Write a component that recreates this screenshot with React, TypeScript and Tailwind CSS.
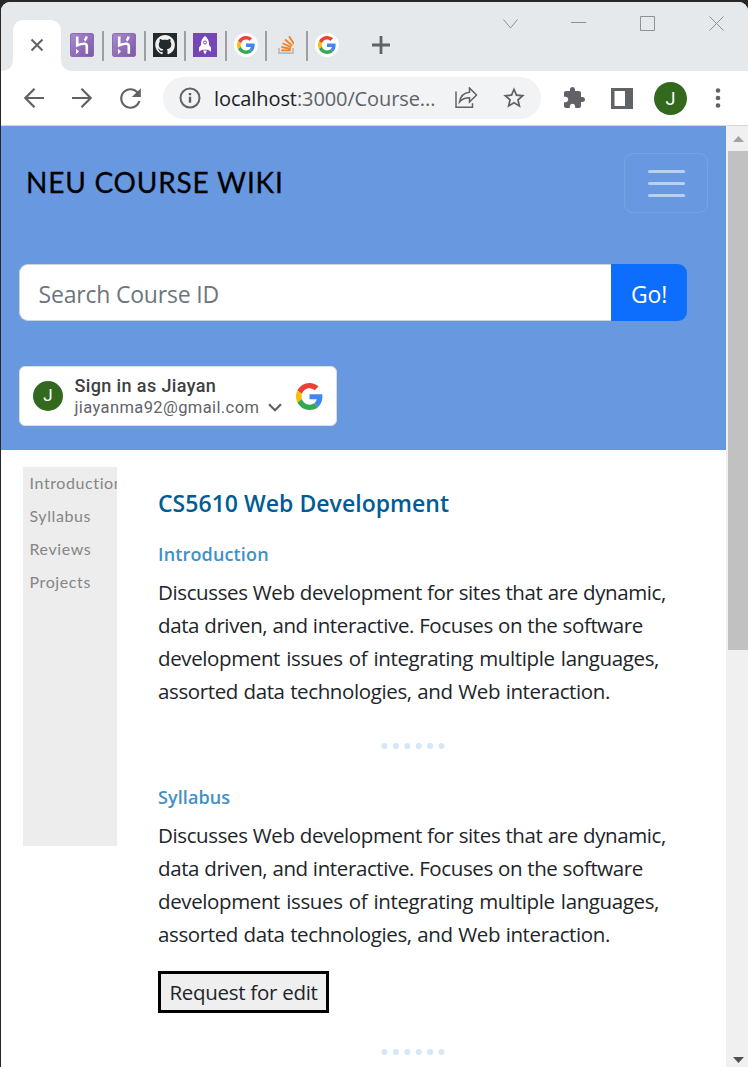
import type { ReactNode } from 'react';

const SEGOE = "font-['Open_Sans','Noto_Sans',sans-serif]";

function GoogleG({ className }: { className: string }) {
  return (
    <svg viewBox="0 0 48 48" className={className}>
      <path fill="#EA4335" d="M24 9.5c3.54 0 6.71 1.22 9.21 3.6l6.85-6.85C35.9 2.38 30.47 0 24 0 14.62 0 6.51 5.38 2.56 13.22l7.98 6.19C12.43 13.72 17.74 9.5 24 9.5z" />
      <path fill="#4285F4" d="M46.98 24.55c0-1.57-.15-3.09-.38-4.55H24v9.02h12.94c-.58 2.96-2.26 5.48-4.78 7.18l7.73 6c4.51-4.18 7.09-10.36 7.09-17.65z" />
      <path fill="#FBBC05" d="M10.53 28.59c-.48-1.45-.76-2.99-.76-4.59s.27-3.14.76-4.59l-7.98-6.19C.92 16.46 0 20.12 0 24c0 3.88.92 7.54 2.56 10.78l7.97-6.19z" />
      <path fill="#34A853" d="M24 48c6.48 0 11.93-2.13 15.89-5.81l-7.73-6c-2.15 1.45-4.92 2.3-8.16 2.3-6.26 0-11.57-4.22-13.47-9.91l-7.98 6.19C6.51 42.62 14.62 48 24 48z" />
    </svg>
  );
}

function Heroku() {
  return (
    <svg viewBox="0 0 24 24" className="size-6">
      <defs>
        <linearGradient id="hk" x1="0" y1="0" x2="1" y2="1">
          <stop offset="0" stopColor="#a98bd0" />
          <stop offset="1" stopColor="#7c56a3" />
        </linearGradient>
      </defs>
      <rect width="24" height="24" rx="3" fill="url(#hk)" />
      <rect x="0.5" y="0.5" width="23" height="23" rx="2.5" fill="none" stroke="#8d6bb8" />
      <path d="M7.2 3.500v8.800c2.600-1.100 5-1.600 7-1.600 2 0 2.600 1 2.600 2.400V20.800" fill="none" stroke="#fff" strokeWidth="2.600" />
      <path d="M16.600 3.500c-.2 1.600-.9 2.900-2 4.100" fill="none" stroke="#fff" strokeWidth="2.500" />
      <path d="M6 15.800v5.400l3-2.700z" fill="#fff" />
    </svg>
  );
}

function Github() {
  return (
    <svg viewBox="0 0 24 24" className="size-6">
      <rect width="24" height="24" fill="#24292e" />
      <g transform="translate(2.200 2) scale(1.230)">
        <path fill="#f0f0ee" d="M8 0C3.580 0 0 3.580 0 8c0 3.540 2.290 6.530 5.470 7.590.4.070.55-.17.55-.38 0-.19-.01-.82-.01-1.490-2.010.37-2.530-.49-2.690-.94-.09-.23-.48-.94-.82-1.130-.28-.15-.68-.52-.01-.53.63-.01 1.080.58 1.230.82.72 1.210 1.870.87 2.330.66.070-.52.28-.87.51-1.070-1.780-.2-3.640-.89-3.640-3.950 0-.87.31-1.590.82-2.150-.08-.2-.36-1.020.08-2.120 0 0 .67-.21 2.200.82.64-.18 1.320-.27 2-.27s1.360.09 2 .27c1.530-1.040 2.200-.82 2.200-.82.44 1.100.16 1.920.08 2.120.51.56.82 1.270.82 2.150 0 3.070-1.870 3.750-3.650 3.950.29.25.54.73.54 1.480 0 1.070-.01 1.930-.01 2.200 0 .21.15.46.55.38A8.013 8.013 0 0 0 16 8c0-4.420-3.580-8-8-8z" />
      </g>
    </svg>
  );
}

function Rocket() {
  return (
    <svg viewBox="0 0 24 24" className="size-6">
      <rect width="24" height="24" fill="#7546b5" />
      <path fill="#fff" d="M12 3c2.600 2 4 4.600 4 7.600v1.400l2 2.600v4.200l-3-2h-6l-3 2v-4.200l2-2.600v-1.400C8 7.600 9.400 5 12 3z" />
      <circle cx="12" cy="9.500" r="1.500" fill="none" stroke="#7546b5" />
      <path fill="#fff" d="M10 17.500h4l-2 4z" />
    </svg>
  );
}

const Sep = () => <div className="mt-[11px] h-[30px] w-[1.500px] shrink-0 bg-[#9b9ea2]" />;

function Fav({ children, className }: { children: ReactNode; className: string }) {
  return <div className={`flex h-[50px] shrink-0 items-center justify-center ${className}`}>{children}</div>;
}

const RoundG = () => (
  <div className="flex size-6 items-center justify-center rounded-full bg-white">
    <GoogleG className="size-[18px]" />
  </div>
);

function TabStrip() {
  return (
    <div className="relative flex h-[69px] shrink-0 items-start bg-[#e5e9ec] pt-[18px]">
      <div className="relative ml-3 h-[51px] w-[48px] shrink-0 rounded-t-[10px] bg-white">
        <svg viewBox="0 0 72 51" className="absolute top-0 -left-3 h-[51px] w-[72px]">
          <path d="M0 51c8 0 12-4 12-12v12zM72 51c-8 0-12-4-12-12v12z" fill="#fff" />
          <path d="M30.500 19.500l11 11M41.500 19.500l-11 11" stroke="#5f6368" strokeWidth="2" />
        </svg>
      </div>
      <Fav className="w-[41px]"><Heroku /></Fav>
      <Sep />
      <Fav className="w-[40.500px]"><Heroku /></Fav>
      <Sep />
      <Fav className="w-[38.500px]"><Github /></Fav>
      <Sep />
      <Fav className="w-[39.500px]"><Rocket /></Fav>
      <Sep />
      <Fav className="w-[38.500px]"><RoundG /></Fav>
      <Sep />
      <Fav className="w-[39.500px]">
        <svg viewBox="0 0 16 20" className="h-5 w-4">
          <path d="M1 13v5.200h14V13" fill="none" stroke="#bcbbbb" strokeWidth="1.800" />
          <path d="M3.200 15.300h9.500M3.400 12l9.300 1.900M4.600 8.300l8.600 4M7 4.500l7.200 6.200M11 1.200l5 7.700" fill="none" stroke="#f48024" strokeWidth="1.800" />
        </svg>
      </Fav>
      <Sep />
      <Fav className="w-[38px]"><RoundG /></Fav>
      <svg viewBox="0 0 18 18" className="mt-4 ml-[26px] size-[18px]">
        <path d="M9 0v18M0 9h18" stroke="#5f6368" strokeWidth="2.800" />
      </svg>
      <svg viewBox="0 0 222 16" className="absolute top-[14px] left-[501px] h-4 w-[222px]" fill="none" stroke="#8e9194" strokeWidth="1">
        <path d="M1.500 3.500l7 8.500 7-8.500M69 6.500h15M138.500 .5h14v14h-14zM207.500 .5l14 14M221.500 .5l-14 14" />
      </svg>
    </div>
  );
}

function Toolbar() {
  return (
    <div className="flex h-[55px] shrink-0 items-center border-b border-[#d5d7da] bg-white">
      <svg viewBox="0 0 24 24" className="ml-[21px] size-6" fill="none" stroke="#5f6368" strokeWidth="2.200">
        <path d="M22 12H4M12.500 2.700L3.300 12l9.200 9.300" />
      </svg>
      <svg viewBox="0 0 24 24" className="ml-6 size-6" fill="none" stroke="#5f6368" strokeWidth="2.200">
        <path d="M2 12h18M11.500 2.700l9.200 9.300-9.200 9.300" />
      </svg>
      <svg viewBox="0 0 24 24" className="ml-[20.500px] size-[31px]" fill="#5f6368">
        <path d="M17.650 6.350C16.200 4.900 14.210 4 12 4c-4.420 0-7.990 3.580-7.990 8s3.570 8 7.990 8c3.730 0 6.840-2.550 7.730-6h-1.800c-.82 2.500-3.200 4.300-5.930 4.300-3.500 0-6.300-2.800-6.300-6.300s2.800-6.300 6.300-6.300c1.700 0 3.300.69 4.420 1.880L13 10.800h7V4l-2.350 2.350z" />
      </svg>
      <div className="ml-[17.500px] flex h-[42px] w-[378px] shrink-0 items-center rounded-full bg-[#f1f3f4]">
        <svg viewBox="0 0 22 22" className="ml-[16px] size-[22px]" fill="none" stroke="#5f6368" strokeWidth="2">
          <circle cx="11" cy="11" r="9.500" />
          <path d="M11 9.800v6M11 6v2.200" strokeWidth="2.400" />
        </svg>
        <div className={`ml-[13px] w-[221px] pt-px text-[20px] leading-[28px] tracking-[-0.1px] whitespace-nowrap text-[#5f6368] ${SEGOE}`}>
          <span className="text-[#202124]">localhost</span>:3000/Course...
        </div>
        <svg viewBox="0 0 24 22" className="ml-[19px] h-[22px] w-6" fill="none" stroke="#5f6368" strokeWidth="1.500">
          <path d="M2 4.500v15.700h16.500v-4" />
          <path d="M15.500 1l7 7-7 7v-4.200c-4.500 0-7.500 1.200-10 4.200.8-5 3.800-9.200 10-9.800z" />
        </svg>
        <svg viewBox="0 0 24 24" className="ml-[23px] size-[26px]" fill="#5f6368">
          <path d="M22 9.240l-7.190-.62L12 2 9.190 8.630 2 9.240l5.460 4.730L5.820 21 12 17.270 18.180 21l-1.630-7.030L22 9.240zM12 15.400l-3.760 2.270 1-4.280-3.320-2.880 4.380-.38L12 6.100l1.710 4.040 4.380.38-3.320 2.880 1 4.280L12 15.400z" />
        </svg>
      </div>
      <svg viewBox="0 0 24 24" className="ml-[21px] size-6" fill="#5f6368">
        <path d="M20.500 11H19V7c0-1.100-.9-2-2-2h-4V3.500C13 2.120 11.880 1 10.500 1S8 2.120 8 3.500V5H4c-1.100 0-1.990.9-1.990 2v3.800H3.500c1.490 0 2.700 1.210 2.700 2.700s-1.210 2.700-2.700 2.700H2V20c0 1.100.9 2 2 2h3.800v-1.500c0-1.490 1.210-2.700 2.700-2.700 1.490 0 2.700 1.210 2.700 2.700V22H17c1.100 0 2-.9 2-2v-4h1.500c1.380 0 2.500-1.120 2.500-2.500S21.880 11 20.500 11z" />
      </svg>
      <svg viewBox="0 0 22 21" className="ml-[25px] h-[21px] w-[22px]">
        <path fillRule="evenodd" fill="#5f6368" d="M0 0h22v21H0zM3.500 3v15H14V3z" />
      </svg>
      <div className="ml-[21px] flex size-[33px] items-center justify-center rounded-full bg-[#33691e] font-['Roboto',sans-serif] text-[18px] text-white">J</div>
      <svg viewBox="0 0 6 20" className="ml-[28px] h-5 w-[6px]" fill="#5f6368">
        <circle cx="3" cy="2.500" r="2.300" />
        <circle cx="3" cy="10" r="2.300" />
        <circle cx="3" cy="17.500" r="2.300" />
      </svg>
    </div>
  );
}

function Header() {
  return (
    <header className="h-[324px] bg-[#6899e0] pt-[27px] pl-[18px]">
      <div className="flex h-[60px] items-center justify-between pr-[18px] pl-[7px]">
        <div className="pb-[2px] font-['Lato',sans-serif] text-[28px] leading-none tracking-[0.8px] whitespace-nowrap text-black [-webkit-text-stroke:0.3px_#000]">NEU COURSE WIKI</div>
        <div className="flex h-[60px] w-[84px] flex-col items-center justify-center gap-[9px] rounded-[9px] border border-white/10">
          <div className="h-[3px] w-[37px] rounded-full bg-white/55" />
          <div className="h-[3px] w-[37px] rounded-full bg-white/55" />
          <div className="h-[3px] w-[37px] rounded-full bg-white/55" />
        </div>
      </div>
      <div className={`mt-[51px] flex h-[57px] w-[668px] text-[23px] tracking-[-0.2px] ${SEGOE}`}>
        <div className="flex flex-1 items-center rounded-l-[9px] border border-r-0 border-[#ced4da] bg-white pt-[4px] pl-[18.500px] whitespace-nowrap text-[#6c757d]">Search Course ID</div>
        <div className="flex w-[76px] items-center justify-center rounded-r-[9px] bg-[#0d6efd] pt-[4px] text-white">Go!</div>
      </div>
      <div className="mt-[45px] flex h-[60px] w-[318px] items-center rounded-[6px] border border-[#dadce0] bg-white pl-[13px] font-['Roboto',sans-serif]">
        <div className="flex size-[30px] items-center justify-center rounded-full bg-[#33691e] text-[17px] text-white">J</div>
        <div className="ml-[11.500px] w-[212px] whitespace-nowrap">
          <div className="h-[22px] text-[18px] leading-[22px] font-medium tracking-[0.380px] text-[#3c4043]">Sign in as Jiayan</div>
          <div className="flex h-[21px] items-center text-[16.500px] leading-[21px] tracking-[0.390px] text-[#5f6368]">
            jiayanma92@gmail.com
            <svg viewBox="0 0 14 9" className="ml-[9px] h-[9px] w-[14px]" fill="none" stroke="#5f6368" strokeWidth="2.300">
              <path d="M1 1.200l6 6 6-6" />
            </svg>
          </div>
        </div>
        <GoogleG className="ml-[9.500px] size-[27px]" />
      </div>
    </header>
  );
}

function Line({ children, className }: { children: ReactNode; className: string }) {
  return <div className={`h-[33px] whitespace-nowrap [text-align-last:justify] ${className}`}>{children}</div>;
}

function Description() {
  return (
    <div className="text-[20.500px] leading-[33px] font-[370] tracking-[-0.38px] text-[#212529]">
      <Line className="w-[508px]">Discusses Web development for sites that are dynamic,</Line>
      <Line className="w-[485px]">data driven, and interactive. Focuses on the software</Line>
      <Line className="w-[501px]">development issues of integrating multiple languages,</Line>
      <Line className="w-[452px]">assorted data technologies, and Web interaction.</Line>
    </div>
  );
}

function Dots() {
  return (
    <div className="flex h-[6px] justify-between pl-[222.500px]">
      <svg viewBox="0 0 65 6" className="h-[6px] w-[65px]" fill="#d6e8f8">
        {[0, 1, 2, 3, 4, 5].map((i) => (
          <circle key={i} cx={3.5 + i * 11.4} cy="3" r="3.1" />
        ))}
      </svg>
    </div>
  );
}

export default function App() {
  return (
    <div className="h-[1067px] w-[748px] overflow-hidden bg-[#2b2727] pt-[2px] pl-px">
      <div className="flex h-[1065px] flex-col overflow-hidden rounded-t-[9px] bg-white">
        <TabStrip />
        <Toolbar />
        <div className="flex min-h-0 flex-1">
          <div className="w-[725px] shrink-0">
            <Header />
            <div className={`flex pt-[17px] pl-[22px] ${SEGOE}`}>
              <nav className="h-[379px] w-[94px] shrink-0 overflow-hidden bg-[#ededed] pl-[6.500px] font-['Lato',sans-serif] text-[16px] leading-[32px] tracking-[0.600px] whitespace-nowrap text-[#858585]">
                <div className="h-[33px]">Introduction</div>
                <div className="h-[33px]">Syllabus</div>
                <div className="h-[33px]">Reviews</div>
                <div className="h-[33px]">Projects</div>
              </nav>
              <main className="ml-[41px] pt-[20px]">
                <h1 className="h-[34px] text-[23px] leading-[32px] font-semibold tracking-[0.03px] whitespace-nowrap text-[#005b96]">CS5610 Web Development</h1>
                <h2 className="mt-[17px] h-[32px] text-[18px] leading-[32px] font-semibold tracking-[0.15px] text-[#4190c7]">Introduction</h2>
                <div className="mt-[6px]"><Description /></div>
                <div className="mt-[35px]"><Dots /></div>
                <h2 className="mt-[32px] h-[32px] text-[18px] leading-[32px] font-semibold tracking-[0.1px] text-[#4190c7]">Syllabus</h2>
                <div className="mt-[6px]"><Description /></div>
                <div className="mt-[20px] flex h-[42px] w-[171px] items-center justify-center border-[3px] border-black bg-[#efefef] pt-px text-[20.500px] font-[370] tracking-[-0.28px] whitespace-nowrap text-[#212529]">Request for edit</div>
                <div className="mt-[36px]"><Dots /></div>
              </main>
            </div>
          </div>
          <div className="flex flex-1 flex-col items-end bg-[#f0f0f0]">
            <svg viewBox="0 0 20 25" className="h-[25px] w-5 shrink-0"><path d="M5 16l5.500-6 5.500 6z" fill="#a3a3a3" /></svg>
            <div className="h-[499px] w-5 shrink-0 bg-[#c1c1c1]" />
            <div className="flex-1" />
            <svg viewBox="0 0 20 25" className="h-[25px] w-5 shrink-0"><path d="M5 15l5.500 6 5.500-6z" fill="#505050" /></svg>
          </div>
        </div>
      </div>
    </div>
  );
}
